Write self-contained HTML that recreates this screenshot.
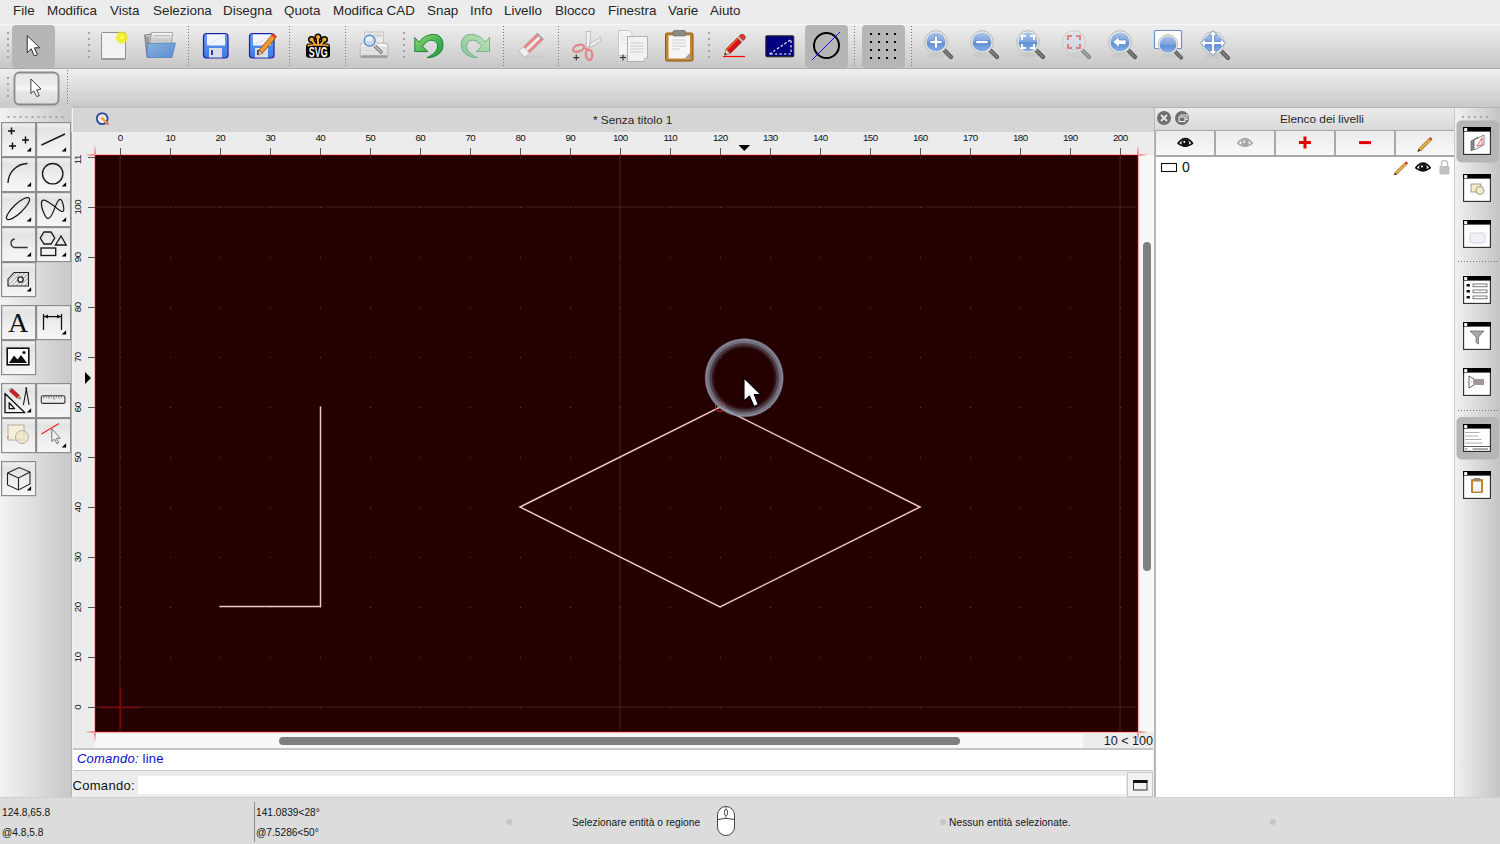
<!DOCTYPE html>
<html><head><meta charset="utf-8">
<style>
*{margin:0;padding:0;box-sizing:border-box}
html,body{width:1500px;height:844px;overflow:hidden;background:#ececec;font-family:"Liberation Sans",sans-serif;color:#222}
.a{position:absolute}
#menu{left:0;top:0;width:1500px;height:24px;background:#ececec}
#menu span{position:absolute;top:3px;font-size:13.4px;color:#262626;white-space:nowrap}
#tb1{left:0;top:24px;width:1500px;height:45px;background:linear-gradient(#eeeeee,#c7c7c7);border-top:1px solid #f6f6f6;border-bottom:1px solid #acacac}
#tb2{left:0;top:69px;width:1500px;height:39px;background:linear-gradient(#efefef,#c9c9c9);border-bottom:1px solid #b0b0b0}
.dots{position:absolute;width:0;border-left:2px dotted #8a8a8a}
#dockL{left:0;top:108px;width:72px;height:690px;background:linear-gradient(90deg,#f2f2f2,#c8c8c8);border-right:1px solid #b4b4b4}
#mdi{left:72px;top:108px;width:1083px;height:690px;background:#ececec;border-left:1px solid #f2f2f2}
#title{left:71px;top:108px;width:1083px;height:24px;background:#d5d5d5}
#rulH{left:72px;top:132px;width:1082px;height:23px;background:#ececec}
#rulV{left:72px;top:155px;width:23px;height:577px;background:#ececec}
#canvas{left:95px;top:155px;width:1043px;height:577px;background:#210000}
#vscroll{left:1138px;top:132px;width:16px;height:600px;background:#f7f7f7}
#hscroll{left:95px;top:732px;width:1059px;height:16px;background:#f7f7f7}
#cmdh{left:72px;top:749px;width:1082px;height:21px;background:#fff;border-top:1px solid #c8c8c8;border-bottom:1px solid #c8c8c8}
#cmdi{left:72px;top:770px;width:1082px;height:28px;background:#ececec}
#panel{left:1155px;top:108px;width:299px;height:690px;background:#fff;border-left:1px solid #bdbdbd}
#dockR{left:1454px;top:108px;width:46px;height:690px;background:linear-gradient(90deg,#f0f0f0,#c4c4c4);border-left:1px solid #c8c8c8}
#status{left:0;top:798px;width:1500px;height:46px;background:#dcdcdc}
.st{position:absolute;font-size:10.5px;color:#141414;white-space:nowrap}
</style></head><body>
<div id="menu" class="a">
<span style="left:13px">File</span>
<span style="left:47px">Modifica</span>
<span style="left:110px">Vista</span>
<span style="left:153px">Seleziona</span>
<span style="left:223px">Disegna</span>
<span style="left:284px">Quota</span>
<span style="left:333px">Modifica CAD</span>
<span style="left:427px">Snap</span>
<span style="left:470px">Info</span>
<span style="left:504px">Livello</span>
<span style="left:555px">Blocco</span>
<span style="left:608px">Finestra</span>
<span style="left:668px">Varie</span>
<span style="left:710px">Aiuto</span>
</div>
<div id="tb1" class="a"></div>
<svg class="a" style="left:0;top:24px" width="1500" height="45" viewBox="0 24 1500 45">
<defs>
<linearGradient id="gBlueLens" x1="0" y1="0" x2="0" y2="1"><stop offset="0" stop-color="#a9c4ea"/><stop offset="0.5" stop-color="#7ba2dc"/><stop offset="0.55" stop-color="#5d8ed6"/><stop offset="1" stop-color="#8ab2ea"/></linearGradient>
<linearGradient id="gRedLens" x1="0" y1="0" x2="0" y2="1"><stop offset="0" stop-color="#dde3ee"/><stop offset="1" stop-color="#c6d2e6"/></linearGradient>
<linearGradient id="gFloppy" x1="0" y1="0" x2="0" y2="1"><stop offset="0" stop-color="#6aa0f4"/><stop offset="1" stop-color="#3e78e4"/></linearGradient>
<linearGradient id="gUndo" x1="0" y1="0" x2="1" y2="1"><stop offset="0" stop-color="#9ad878"/><stop offset="0.6" stop-color="#3fb050"/><stop offset="1" stop-color="#1f9a38"/></linearGradient><linearGradient id="gRedo" x1="0" y1="0" x2="1" y2="1"><stop offset="0" stop-color="#c2e4b0"/><stop offset="0.6" stop-color="#9fd0a4"/><stop offset="1" stop-color="#84c096"/></linearGradient>
<linearGradient id="gPrinter" x1="0" y1="0" x2="0" y2="1"><stop offset="0" stop-color="#fbfbfb"/><stop offset="1" stop-color="#d4d4d4"/></linearGradient>
<radialGradient id="gGlow"><stop offset="0" stop-color="#fffff0"/><stop offset="0.25" stop-color="#f8f020"/><stop offset="0.7" stop-color="#f0ea20" stop-opacity="0.8"/><stop offset="1" stop-color="#f0ea20" stop-opacity="0"/></radialGradient><linearGradient id="gPaper" x1="0" y1="0" x2="0" y2="1"><stop offset="0" stop-color="#fafafa"/><stop offset="0.4" stop-color="#c8c8c8"/><stop offset="1" stop-color="#e8e8e8"/></linearGradient><linearGradient id="gFolder" x1="0" y1="0" x2="1" y2="1"><stop offset="0" stop-color="#8ab0dc"/><stop offset="1" stop-color="#5a8ed0"/></linearGradient><g id="lens">
 <ellipse cx="1" cy="13.5" rx="10" ry="2.5" fill="#000" opacity="0.035"/>
 <line x1="7" y1="7" x2="15" y2="15" stroke="#5a5a5a" stroke-width="4.2" stroke-linecap="round"/>
 <line x1="7" y1="7" x2="15" y2="15" stroke="#8a8a8a" stroke-width="1.4" stroke-linecap="round"/>
 <circle r="11.3" fill="#ebebe6" stroke="#b9b9b0" stroke-width="1"/>
</g>
</defs>
<rect x="12" y="25" width="43" height="43" rx="4" fill="#b6b6b6"/>
<path d="M27.2 35.6 L27.2 52.6 L31.2 48.8 L34.3 56 L37.3 54.7 L34.4 47.8 L39.7 47.8 Z" fill="#fff" stroke="#1a1a1a" stroke-width="0.9" stroke-linejoin="round"/>
<!-- handles -->
<g fill="#a3a3a3">
<rect x="7" y="32" width="2" height="2"/><rect x="7" y="38" width="2" height="2"/><rect x="7" y="44" width="2" height="2"/><rect x="7" y="50" width="2" height="2"/><rect x="7" y="56" width="2" height="2"/>
<rect x="88" y="32" width="2" height="2"/><rect x="88" y="38" width="2" height="2"/><rect x="88" y="44" width="2" height="2"/><rect x="88" y="50" width="2" height="2"/><rect x="88" y="56" width="2" height="2"/>
<rect x="403" y="32" width="2" height="2"/><rect x="403" y="38" width="2" height="2"/><rect x="403" y="44" width="2" height="2"/><rect x="403" y="50" width="2" height="2"/><rect x="403" y="56" width="2" height="2"/>
<rect x="708" y="32" width="2" height="2"/><rect x="708" y="38" width="2" height="2"/><rect x="708" y="44" width="2" height="2"/><rect x="708" y="50" width="2" height="2"/><rect x="708" y="56" width="2" height="2"/>
</g>
<g stroke="#777" stroke-width="1" stroke-dasharray="1 2">
<line x1="188.5" y1="26" x2="188.5" y2="67"/><line x1="289.5" y1="26" x2="289.5" y2="67"/><line x1="345.5" y1="26" x2="345.5" y2="67"/><line x1="503.5" y1="26" x2="503.5" y2="67"/><line x1="558.5" y1="26" x2="558.5" y2="67"/><line x1="854.5" y1="26" x2="854.5" y2="67"/><line x1="911.5" y1="26" x2="911.5" y2="67"/>
</g>
<!-- new doc -->
<rect x="101.5" y="32.5" width="24" height="27" rx="1" fill="#f2f2f2" stroke="#8f8f8f"/>
<rect x="102" y="58" width="23" height="2" fill="#9a9a9a"/>
<circle cx="121.8" cy="37.5" r="7" fill="url(#gGlow)"/>
<!-- open folder -->
<path d="M144.5 35 L151 34 L151 57 L147 57 Z" fill="#9a9a9a" stroke="#6a6a6a" stroke-width="0.6"/>
<path d="M146 36 L150 35.5 L149 56" fill="none" stroke="#f4f4f4" stroke-width="0.8"/>
<path d="M151.5 32.5 L172.7 32.5 L170.5 50 L148 52 Z" fill="url(#gPaper)" stroke="#8a8a8a" stroke-width="0.7"/>
<path d="M154 35.5 L170 35.5" stroke="#bbb" stroke-width="1"/>
<path d="M147 43.5 L175.5 43 L172 57.5 L147 57.5 Z" fill="url(#gFolder)" stroke="#4a7ac0" stroke-width="0.7"/>
<!-- save -->
<g id="floppy">
<rect x="203.5" y="33.5" width="24.5" height="24.5" rx="3" fill="url(#gFloppy)" stroke="#2222a0" stroke-width="1.2"/>
<rect x="207" y="34.5" width="18" height="11" fill="#f4f6ff"/>
<path d="M207 45 L225 36" stroke="#d6def6" stroke-width="1"/>
<rect x="209" y="48" width="13" height="9.5" fill="#d9dde6"/>
<rect x="211" y="50" width="2" height="5" fill="#2040c0"/>
</g>
<use href="#floppy" x="46" y="0"/>
<path d="M259 50 L272.5 34.5 L276 37.5 L262.5 53 Z" fill="#f29a2a" stroke="#9a4010" stroke-width="0.8"/>
<path d="M271.5 35.5 L273.5 33.3 L277 36.5 L275 38.5 Z" fill="#e23a2a"/>
<path d="M259 50 L262.5 53 L258 55 Z" fill="#f0d0a0" stroke="#703010" stroke-width="0.6"/>
<!-- svg -->
<g fill="#000" stroke="#000" stroke-linecap="round">
<path d="M311.6 39.5 L315.5 45 M318 37.3 L318 45 M324.4 39.5 L320.5 45" stroke-width="4.6"/>
<circle cx="311.6" cy="39.5" r="3.6" stroke="none"/><circle cx="318" cy="37.1" r="3.6" stroke="none"/><circle cx="324.4" cy="39.5" r="3.6" stroke="none"/>
</g>
<rect x="306" y="43.5" width="24" height="14.3" rx="3" fill="#000"/>
<g stroke="#f4aa30" stroke-linecap="round" fill="#f4aa30">
<path d="M311.6 39.5 L315.5 45 M318 37.3 L318 45 M324.4 39.5 L320.5 45" stroke-width="2"/>
<circle cx="311.6" cy="39.5" r="2.1" stroke="none"/><circle cx="318" cy="37.1" r="2.1" stroke="none"/><circle cx="324.4" cy="39.5" r="2.1" stroke="none"/>
<path d="M308 45.6 Q318 43.8 328 45.6" stroke-width="1.6" fill="none"/>
</g>
<text x="318.2" y="57.2" font-family="Liberation Sans" font-weight="bold" font-size="14" fill="#fff" text-anchor="middle" textLength="18.8" lengthAdjust="spacingAndGlyphs">SVG</text>
<!-- print preview -->
<rect x="364.5" y="32" width="19" height="14" rx="1.5" fill="#ececec" stroke="#b8b8b8" stroke-width="0.8"/>
<rect x="366" y="34" width="16" height="3" fill="#d4d4d4"/>
<path d="M360.2 46 Q360.2 43.2 363 43.2 H385 Q387.8 43.2 387.8 46 V57.6 H360.2 Z" fill="url(#gPrinter)" stroke="#a8a8a8" stroke-width="0.8"/>
<rect x="362.5" y="47" width="23" height="3.5" rx="1" fill="#e2e2e2" stroke="#c8c8c8" stroke-width="0.5"/>
<rect x="361" y="55.2" width="26" height="2.6" rx="1" fill="#9a9a9a"/>
<line x1="374" y1="45" x2="381" y2="52" stroke="#7a7a7a" stroke-width="3.6" stroke-linecap="round"/>
<line x1="374" y1="45" x2="381" y2="52" stroke="#c8c8c8" stroke-width="1.4" stroke-linecap="round"/>
<circle cx="369.6" cy="40.7" r="7.2" fill="#fafafa" stroke="#d0d0d0" stroke-width="0.6"/>
<circle cx="369.6" cy="40.7" r="5.5" fill="#c8d8ee" stroke="#4a80c8" stroke-width="1.3"/>
<ellipse cx="369" cy="39" rx="3.4" ry="2.2" fill="#eef4fc" opacity="0.85"/>
<!-- undo -->
<path d="M414.8 37.5 L418.8 42.2 C424 35.5 432 32.8 438 35.3 C444.3 38.5 444.8 49 439.3 53.5 C435.8 56.5 430.5 58 427 57.6 C431.5 55.5 437 52 437.6 47 C438 42.5 434.5 40 430.5 40.3 C427.5 40.6 424.8 43 422.6 46.4 L427.9 51.6 L414.8 51.6 Z" fill="url(#gUndo)" stroke="#13792c" stroke-width="0.9" stroke-linejoin="round"/>
<g transform="translate(904.3 0) scale(-1 1)">
<path d="M414.8 37.5 L418.8 42.2 C424 35.5 432 32.8 438 35.3 C444.3 38.5 444.8 49 439.3 53.5 C435.8 56.5 430.5 58 427 57.6 C431.5 55.5 437 52 437.6 47 C438 42.5 434.5 40 430.5 40.3 C427.5 40.6 424.8 43 422.6 46.4 L427.9 51.6 L414.8 51.6 Z" fill="url(#gRedo)" stroke="#6cae86" stroke-width="0.9" stroke-linejoin="round"/>
</g>
<!-- eraser -->
<ellipse cx="534" cy="57" rx="11" ry="1.6" fill="#c8c8c8" opacity="0.7"/>
<g transform="translate(531.3 45.2) rotate(-44.4)">
<rect x="-12.9" y="-4.3" width="25.8" height="8.6" fill="#e68a8a" stroke="#c87878" stroke-width="0.5"/>
<rect x="-7" y="-1.4" width="19.9" height="2.8" fill="#f2eeee"/>
<rect x="-12.9" y="-4.3" width="6" height="8.6" fill="#f0f0f0" stroke="#b8b8b8" stroke-width="0.5"/>
<rect x="11.4" y="-4.3" width="1.5" height="8.6" fill="#a0a0a0"/>
</g>
<!-- scissors -->
<path d="M586.2 31.5 L590.5 31.2 L589.8 47 L586.3 47 Z" fill="#f2f2f2" stroke="#a8a8a8" stroke-width="0.7"/>
<path d="M589.5 44 L600.7 37.5 L601 40.8 L590.5 47.3 Z" fill="#f2f2f2" stroke="#a8a8a8" stroke-width="0.7"/>
<ellipse cx="578.6" cy="48.2" rx="5.7" ry="3.2" transform="rotate(-20 578.6 48.2)" fill="none" stroke="#e48888" stroke-width="2.4"/>
<ellipse cx="589.1" cy="54.8" rx="3.2" ry="5.2" transform="rotate(-6 589.1 54.8)" fill="none" stroke="#e48888" stroke-width="2.4"/>
<path d="M584 48 L588.5 50" stroke="#e48888" stroke-width="2.2"/>
<path d="M573.3 57.6 L579.3 57.6 M576.3 54.6 L576.3 60.6" stroke="#333" stroke-width="1.1"/>
<!-- copy -->
<path d="M618.5 30.5 L629 30.5 L632 33.5 L632 55.5 L618.5 55.5 Z" fill="#f4f4f4" stroke="#c8c8c8"/>
<path d="M621 37 L628 37 M621 40 L628 40 M621 43 L628 43" stroke="#dcdcdc" stroke-width="0.8"/>
<path d="M627.5 36.5 L647.5 36.5 L647.5 58 L644 61.5 L627.5 61.5 Z" fill="#f2f2f2" stroke="#b0b0b0"/>
<path d="M630.5 43 L644 43 M630.5 46 L644 46 M630.5 49 L644 49 M630.5 52 L644 52" stroke="#c4c4c4" stroke-width="0.8"/>
<path d="M647.5 58 L644 58 L644 61.5" fill="#d8d8d8" stroke="#b0b0b0" stroke-width="0.6"/>
<path d="M620 57.5 L626 57.5 M623 54.5 L623 60.5" stroke="#333" stroke-width="1.1"/>
<!-- paste -->
<rect x="665.5" y="33" width="27.5" height="28" rx="1.5" fill="#c08432" stroke="#8a5a18"/>
<rect x="668.5" y="35.5" width="21.5" height="23" fill="#f6f6f6"/>
<rect x="673" y="30.5" width="12.5" height="5.5" rx="1.5" fill="#8a8a80" stroke="#5a5a50" stroke-width="0.6"/>
<path d="M672 40 L686 40 M672 43 L686 43 M672 46 L686 46 M672 49 L680 49" stroke="#c6c6c6" stroke-width="0.8"/>
<path d="M690 53 L690 58.5 L684.5 58.5 Z" fill="#a0a0a0"/>
<!-- pencil w/ red line -->
<path d="M723 56.5 L745 56.5" stroke="#f00" stroke-width="1.2"/>
<g transform="translate(734 45.5) rotate(-45)">
<path d="M-13.5 0 L-8 -3 L-8 3 Z" fill="#f2d2b0" stroke="#6a4010" stroke-width="0.5"/>
<path d="M-13.5 0 L-11.3 -1.2 L-11.3 1.2 Z" fill="#111"/>
<rect x="-8" y="-3" width="16" height="6" fill="#d8101c" stroke="#6a3010" stroke-width="0.6"/>
<rect x="-8" y="-2.8" width="16" height="1.5" fill="#e85a1a"/>
<rect x="8" y="-3" width="2" height="6" fill="#c8c8c8"/>
<path d="M10 -3 H11.5 A3 3 0 0 1 11.5 3 H10 Z" fill="#f03030" stroke="#6a3010" stroke-width="0.6"/>
</g>
<!-- blue rect -->
<rect x="765.8" y="35.8" width="28" height="21" rx="1" fill="#000080" stroke="#302818" stroke-width="1"/>
<path d="M769.5 54 L791 39.5 L791 54 Z" fill="none" stroke="#fff" stroke-width="1.1" stroke-dasharray="2.5 2"/>
<!-- selected circle -->
<rect x="805" y="25" width="43" height="43" rx="4" fill="#b6b6b6"/>
<circle cx="826.5" cy="45.5" r="12.5" fill="none" stroke="#000" stroke-width="2"/>
<line x1="812" y1="60" x2="840" y2="32" stroke="#1010ff" stroke-width="1"/>
<!-- grid -->
<rect x="862" y="25" width="43" height="43" rx="4" fill="#b6b6b6"/>
<g fill="#000">
<rect x="870" y="33" width="2" height="2"/><rect x="878" y="33" width="2" height="2"/><rect x="886" y="33" width="2" height="2"/><rect x="894" y="33" width="2" height="2"/>
<rect x="870" y="41" width="2" height="2"/><rect x="878" y="41" width="2" height="2"/><rect x="886" y="41" width="2" height="2"/><rect x="894" y="41" width="2" height="2"/>
<rect x="870" y="49" width="2" height="2"/><rect x="878" y="49" width="2" height="2"/><rect x="886" y="49" width="2" height="2"/><rect x="894" y="49" width="2" height="2"/>
<rect x="870" y="57" width="2" height="2"/><rect x="878" y="57" width="2" height="2"/><rect x="886" y="57" width="2" height="2"/><rect x="894" y="57" width="2" height="2"/>
</g>
<!-- zoom in -->
<g transform="translate(936 42)"><use href="#lens"/><circle r="9.5" fill="url(#gBlueLens)"/><path d="M-6 -1.5 H-1.5 V-6 H1.5 V-1.5 H6 V1.5 H1.5 V6 H-1.5 V1.5 H-6 Z" fill="#fff" stroke="#3a68b0" stroke-width="0.5"/></g>
<g transform="translate(982 42)"><use href="#lens"/><circle r="9.5" fill="url(#gBlueLens)"/><rect x="-6" y="-1.5" width="12" height="3" fill="#fff" stroke="#3a68b0" stroke-width="0.5"/></g>
<g transform="translate(1028 42)"><use href="#lens"/><circle r="9.5" fill="url(#gBlueLens)"/><path d="M-6 -2 V-6 H-2 M2 -6 H6 V-2 M6 2 V6 H2 M-2 6 H-6 V2" fill="none" stroke="#fff" stroke-width="2"/></g>
<g transform="translate(1074 42)" opacity="0.6"><use href="#lens"/><circle r="9.5" fill="url(#gRedLens)"/><path d="M-6 -2 V-6 H-2 M2 -6 H6 V-2 M6 2 V6 H2 M-2 6 H-6 V2" fill="none" stroke="#e04040" stroke-width="2"/></g>
<g transform="translate(1120 42)"><use href="#lens"/><circle r="9.5" fill="url(#gBlueLens)"/><path d="M-7 0 L-1 -5.5 V-2 H6 V2.5 H-1 V5.5 Z" fill="#fff" stroke="#3a68b0" stroke-width="0.5"/></g>
<rect x="1154.5" y="30.5" width="27" height="18" rx="1" fill="#fff" stroke="#6a8ed0" stroke-width="1.2"/>
<g transform="translate(1168 44.5) scale(0.88)"><use href="#lens"/><circle r="9.5" fill="url(#gBlueLens)"/></g>
<g transform="translate(1213 43)"><use href="#lens"/><circle r="9.5" fill="url(#gBlueLens)"/><path d="M0 -12.5 L4.2 -7.8 H1.6 V-1.6 H7.8 V-4.2 L12.5 0 L7.8 4.2 V1.6 H1.6 V7.8 H4.2 L0 12.5 L-4.2 7.8 H-1.6 V1.6 H-7.8 V4.2 L-12.5 0 L-7.8 -4.2 V-1.6 H-1.6 V-7.8 H-4.2 Z" fill="#fff" stroke="#4a78c0" stroke-width="0.7" stroke-linejoin="round"/></g>
</svg>

<div id="tb2" class="a"></div>
<svg class="a" style="left:0;top:69px" width="120" height="39" viewBox="0 69 120 39">
<defs><linearGradient id="gBtn2" x1="0" y1="0" x2="0" y2="1"><stop offset="0" stop-color="#e6e6e6"/><stop offset="0.4" stop-color="#eeeeee"/><stop offset="0.5" stop-color="#f8f8f8"/><stop offset="0.62" stop-color="#e6e6e6"/><stop offset="1" stop-color="#dcdcdc"/></linearGradient></defs>
<g fill="#a3a3a3"><rect x="7" y="77" width="2" height="2"/><rect x="7" y="83" width="2" height="2"/><rect x="7" y="89" width="2" height="2"/><rect x="7" y="95" width="2" height="2"/></g>
<rect x="14.5" y="72.5" width="44" height="32" rx="5" fill="url(#gBtn2)" stroke="#8a8a8a" stroke-width="1.8"/>
<path d="M30.9 79 L30.9 93.6 L33.8 91 L36.8 96.6 L39.3 95.5 L36.6 90 L41 89 Z" fill="#fff" stroke="#2a2a2a" stroke-width="0.9" stroke-linejoin="round"/>
<line x1="67.5" y1="70" x2="67.5" y2="106" stroke="#777" stroke-width="1" stroke-dasharray="1 2"/>
</svg>

<div id="dockL" class="a"></div>
<svg class="a" style="left:0;top:108px" width="72" height="400" viewBox="0 108 72 400">
<defs>
<linearGradient id="gBtnL" x1="0" y1="0" x2="0" y2="1"><stop offset="0" stop-color="#f2f2f2"/><stop offset="0.2" stop-color="#e3e3e3"/><stop offset="0.6" stop-color="#efefef"/><stop offset="1" stop-color="#f6f6f6"/></linearGradient>
<path id="tri" d="M0 0 L4.4 -4.2 L4.4 0 Z" fill="#000"/>
<pattern id="hatch" width="3" height="3" patternUnits="userSpaceOnUse" patternTransform="rotate(45)"><line x1="0" y1="0" x2="0" y2="3" stroke="#333" stroke-width="0.7"/></pattern>
</defs>
<g fill="#a5a5a5">
<rect x="7.5" y="116" width="2" height="2"/><rect x="13.5" y="116" width="2" height="2"/><rect x="19.5" y="116" width="2" height="2"/><rect x="25.5" y="116" width="2" height="2"/><rect x="31.5" y="116" width="2" height="2"/><rect x="37.5" y="116" width="2" height="2"/><rect x="43.5" y="116" width="2" height="2"/><rect x="49.5" y="116" width="2" height="2"/><rect x="55.5" y="116" width="2" height="2"/><rect x="61.5" y="116" width="2" height="2"/>
</g>
<g fill="url(#gBtnL)" stroke="#8d8d8d" stroke-width="1.2">
<rect x="1.6" y="122.6" width="34" height="34"/><rect x="36.6" y="122.6" width="34" height="34"/>
<rect x="1.6" y="157.6" width="34" height="34"/><rect x="36.6" y="157.6" width="34" height="34"/>
<rect x="1.6" y="192.6" width="34" height="34"/><rect x="36.6" y="192.6" width="34" height="34"/>
<rect x="1.6" y="227.6" width="34" height="34"/><rect x="36.6" y="227.6" width="34" height="34"/>
<rect x="1.6" y="262.6" width="34" height="34"/>
<rect x="1.6" y="305.6" width="34" height="34"/><rect x="36.6" y="305.6" width="34" height="34"/>
<rect x="1.6" y="340.6" width="34" height="34"/>
<rect x="1.6" y="383.6" width="34" height="34"/><rect x="36.6" y="383.6" width="34" height="34"/>
<rect x="1.6" y="418.6" width="34" height="34"/><rect x="36.6" y="418.6" width="34" height="34"/>
<rect x="1.6" y="461.6" width="34" height="34"/>
</g>
<!-- corner triangles -->
<use href="#tri" x="26.7" y="151.5"/><use href="#tri" x="61.7" y="151.5"/>
<use href="#tri" x="26.7" y="186.5"/><use href="#tri" x="61.7" y="186.5"/>
<use href="#tri" x="26.7" y="221.5"/><use href="#tri" x="61.7" y="221.5"/>
<use href="#tri" x="26.7" y="256.5"/><use href="#tri" x="61.7" y="256.5"/>
<use href="#tri" x="26.7" y="291.5"/>
<use href="#tri" x="61.7" y="334.5"/>
<use href="#tri" x="26.7" y="412.5"/>
<use href="#tri" x="61.7" y="447.5"/>
<use href="#tri" x="26.7" y="490.5"/>
<g stroke="#111" fill="none" stroke-width="1.35">
<!-- points -->
<path d="M8 131 H15 M11.5 127.5 V134.5 M22 140 H29 M25.5 136.5 V143.5 M9 146 H16 M12.5 142.5 V149.5" stroke-width="1.5"/>
<!-- line -->
<path d="M41.5 145 L65 134" stroke="#1a1a1a" stroke-width="1.4"/>
<!-- arc -->
<path d="M8 183 A20 20 0 0 1 27.5 163.5" stroke="#1a1a1a"/>
<!-- circle -->
<circle cx="52.7" cy="173.7" r="10.2" stroke="#1a1a1a"/>
<!-- ellipse -->
<ellipse cx="18" cy="208.6" rx="15.3" ry="4.6" transform="rotate(-43.5 18 208.6)" stroke="#1a1a1a" stroke-width="1.25"/>
<!-- spline -->
<path d="M55.2 206.9 C57 202 58.5 199.2 60.2 199.3 C62.5 199.5 64.6 209.5 63.3 211.2 C62 212.8 58 209 55.2 206.9 C51 204 46 199.5 43.2 200.2 C40.2 201 41.5 207 43 211 C44.5 215 46.5 218.8 48.4 218.5 C50.5 218.2 53 213 55.2 206.9 Z" stroke="#1a1a1a" stroke-width="1.25"/>
<!-- polyline -->
<path d="M14.7 239 A4.3 4.3 0 0 0 14.7 247.5 H27.7" stroke="#333"/>
<!-- shapes -->
<path d="M44 232 H51 L54.7 238 L51 244 H44 L40.3 238 Z M55.5 245 L61 236 L66.2 245 Z" stroke="#1a1a1a"/>
<rect x="41" y="248" width="14.7" height="7.5" stroke="#1a1a1a"/>
<!-- hatch -->
<path d="M8 279 L14 272.5 H28.5 V286 H8 Z" fill="url(#hatch)" stroke="#222" stroke-width="1.1"/>
<circle cx="20.5" cy="279.5" r="2.7" fill="#f0f0f0" stroke="#222"/>
<!-- dimension -->
<path d="M43.5 314 V330 M61.5 314 V330 M44 316.5 H61" stroke="#111" stroke-width="1.25"/>
<path d="M44 316.5 L48 314.5 V318.5 Z M61 316.5 L57 314.5 V318.5 Z" fill="#111" stroke="none"/>
<!-- image -->
<rect x="7.2" y="348.2" width="21.6" height="16.6" stroke="#111" stroke-width="1.6" fill="#fff"/>
<path d="M9 363 L14 355.5 L17.5 359.5 L21 355 L27 363 Z" fill="#111" stroke="none"/>
<circle cx="24" cy="352.5" r="1.6" fill="#111" stroke="none"/>
<!-- set square + compass + pencil -->
<path d="M5 412.7 L5 393.5 L24.9 412.7 Z M9.2 408.6 V402.7 L14.6 408.6 Z" stroke="#111" stroke-width="1.3" stroke-linejoin="round"/>
<g transform="translate(15 393.8) rotate(43)"><rect x="-6" y="-1.8" width="10" height="3.6" fill="#d81c1c" stroke="#5a1010" stroke-width="0.6"/><path d="M4 -1.8 L7.5 0 L4 1.8 Z" fill="#f0c8a0" stroke="#5a1010" stroke-width="0.5"/><rect x="-7.5" y="-1.8" width="1.5" height="3.6" fill="#b0b0b0" stroke="none"/></g>
<path d="M26.3 389 L23.4 405 M26.3 389 L29.1 405" stroke="#111" stroke-width="1.1"/>
<circle cx="26.3" cy="388.3" r="1" fill="#111" stroke="none"/>
<!-- ruler -->
<rect x="41.3" y="395.8" width="23.6" height="7.6" rx="1.5" stroke="#333" stroke-width="1.1"/>
<path d="M44 396 V398.5 M46.5 396 V397.5 M49 396 V398.5 M51.5 396 V397.5 M54 396 V399.5 M56.5 396 V397.5 M59 396 V398.5 M61.5 396 V397.5" stroke="#444" stroke-width="0.7"/>
<!-- block -->
<rect x="8" y="425" width="16" height="15" fill="#f4f0d8" stroke="#a8a8a0" stroke-width="0.9"/>
<circle cx="22" cy="437" r="6.5" fill="#ede6c8" fill-opacity="0.7" stroke="#a8a8a0" stroke-width="0.9"/>
<circle cx="7.8" cy="437.5" r="1" fill="#f07070" stroke="none"/>
<!-- red line + cursor -->
<path d="M41.5 434 L59 423.5" stroke="#ee2222" stroke-width="1.2"/>
<path d="M51.8 428.8 V441.5 L54.6 439 L56.8 443.6 L58.6 442.8 L56.5 438.3 L60.3 438.3 Z" fill="#f4f4f4" stroke="#555" stroke-width="0.8" stroke-linejoin="round"/>
<!-- cube -->
<path d="M7.5 473 L19 467.5 L30 472 L30 484 L18.5 490 L7.5 485 Z M7.5 473 L18.5 478 L30 472 M18.5 478 V490" stroke="#222" stroke-width="1.1"/>
</g>
<text x="18.2" y="331.6" font-family="Liberation Serif" font-size="28" text-anchor="middle" fill="#111">A</text>
</svg>

<div id="mdi" class="a"></div>
<div id="title" class="a"></div>
<div class="a" style="left:71px;top:106px;width:1084px;height:2px;background:#c2c2c2"></div>
<div class="a" style="left:0;top:106px;width:71px;height:2px;background:#cfcfcf"></div>
<svg class="a" style="left:94px;top:110px" width="16" height="17" viewBox="94 110 16 17">
<circle cx="102.2" cy="118.6" r="5.4" fill="#f6f6f6" stroke="#34509c" stroke-width="2"/>
<path d="M99 118 L105 118 M102 115 L102 121" stroke="#c44" stroke-width="0.6" opacity="0.6"/>
<path d="M102.5 118.5 L107.5 123.5" stroke="#f0a020" stroke-width="2.2" stroke-linecap="round"/>
<circle cx="107.6" cy="123.8" r="1.2" fill="#e06060"/>
</svg>
<div class="a" style="left:593px;top:113px;font-size:11.8px;color:#262626;white-space:nowrap">* Senza titolo 1</div>
<!-- scrollbars -->
<div class="a" style="left:1138px;top:155px;width:16px;height:577px;background:#f8f8f8"></div>
<div class="a" style="left:1143px;top:242px;width:8px;height:329px;border-radius:4px;background:#7f7f7f"></div>
<div class="a" style="left:95px;top:732px;width:989px;height:16px;background:#f8f8f8"></div>
<div class="a" style="left:279px;top:737px;width:681px;height:8px;border-radius:4px;background:#7f7f7f"></div>
<div class="a" style="left:72px;top:732px;width:23px;height:16px;background:#ececec"></div>
<div class="a" style="left:1083px;top:732px;width:71px;height:16px;background:#ececec"></div>
<div class="a" style="left:1083px;top:734px;width:71px;text-align:right;font-size:12.6px;color:#1a1a1a;white-space:nowrap;padding-right:1px">10 &lt; 100</div>
<div class="a" style="left:1154px;top:108px;width:1px;height:690px;background:#b8b8b8"></div>
<!-- command area -->
<div class="a" style="left:72px;top:748px;width:1081px;height:2px;background:#c6c6c6"></div>
<div class="a" style="left:72px;top:750px;width:1081px;height:20px;background:#fff"></div>
<div class="a" style="left:77px;top:751px;font-size:13px;color:#0c0cd4;white-space:nowrap;letter-spacing:0.22px"><i>Comando:</i> line</div>
<div class="a" style="left:72px;top:770px;width:1081px;height:1px;background:#c8c8c8"></div>
<div class="a" style="left:72px;top:771px;width:1081px;height:27px;background:#ececec"></div>
<div class="a" style="left:72.5px;top:778px;font-size:13px;color:#111;white-space:nowrap;letter-spacing:0.3px">Comando:</div>
<div class="a" style="left:138px;top:776px;width:988px;height:18px;background:#fff"></div>
<div class="a" style="left:1127px;top:772px;width:26px;height:25px;background:#f2f2f2;border:1px solid #c8c8c8"></div>
<svg class="a" style="left:1127px;top:772px" width="26" height="25" viewBox="1127 772 26 25">
<rect x="1133.5" y="780.5" width="13.5" height="9.5" fill="none" stroke="#333" stroke-width="1"/>
<rect x="1133" y="780" width="14.5" height="3" fill="#111"/>
</svg>

<div id="rulH" class="a"></div>
<div id="rulV" class="a"></div>
<svg class="a" style="left:72px;top:132px" width="1083" height="620" viewBox="72 132 1083 620">
<defs><radialGradient id="gRing" cx="744.2" cy="377.8" r="40" gradientUnits="userSpaceOnUse"><stop offset="0.74" stop-color="#8a90a2" stop-opacity="0"/><stop offset="0.82" stop-color="#70768a" stop-opacity="0.35"/><stop offset="0.90" stop-color="#858b9d" stop-opacity="0.75"/><stop offset="0.96" stop-color="#8f95a6" stop-opacity="0.85"/><stop offset="1" stop-color="#8f95a6" stop-opacity="0"/></radialGradient><clipPath id="cpV"><rect x="72" y="155" width="23" height="577"/></clipPath><clipPath id="cpH"><rect x="95" y="132" width="1043" height="23"/></clipPath><linearGradient id="gL" x1="1" y1="0" x2="0" y2="0"><stop offset="0" stop-color="#ff3a3a" stop-opacity="0.6"/><stop offset="1" stop-color="#ff2020" stop-opacity="0"/></linearGradient><linearGradient id="gR" x1="0" y1="0" x2="1" y2="0"><stop offset="0" stop-color="#ff3a3a" stop-opacity="0.6"/><stop offset="1" stop-color="#ff2020" stop-opacity="0"/></linearGradient><linearGradient id="gU" x1="0" y1="1" x2="0" y2="0"><stop offset="0" stop-color="#ff3a3a" stop-opacity="0.6"/><stop offset="1" stop-color="#ff2020" stop-opacity="0"/></linearGradient><linearGradient id="gD" x1="0" y1="0" x2="0" y2="1"><stop offset="0" stop-color="#ff3a3a" stop-opacity="0.6"/><stop offset="1" stop-color="#ff2020" stop-opacity="0"/></linearGradient></defs>
<rect x="95" y="155" width="1043" height="577" fill="#250000"/>
<line x1="120" y1="156" x2="120" y2="731" stroke="#331010" stroke-width="2"/>
<line x1="620" y1="156" x2="620" y2="731" stroke="#331010" stroke-width="2"/>
<line x1="1120" y1="156" x2="1120" y2="731" stroke="#331010" stroke-width="2"/>
<line x1="96" y1="707" x2="1137" y2="707" stroke="#331010" stroke-width="2"/>
<line x1="96" y1="207" x2="1137" y2="207" stroke="#331010" stroke-width="2"/>
<path d="M120 707h1v1h-1zM120 657h1v1h-1zM120 607h1v1h-1zM120 557h1v1h-1zM120 507h1v1h-1zM120 457h1v1h-1zM120 407h1v1h-1zM120 357h1v1h-1zM120 307h1v1h-1zM120 257h1v1h-1zM120 207h1v1h-1zM120 157h1v1h-1zM170 707h1v1h-1zM170 657h1v1h-1zM170 607h1v1h-1zM170 557h1v1h-1zM170 507h1v1h-1zM170 457h1v1h-1zM170 407h1v1h-1zM170 357h1v1h-1zM170 307h1v1h-1zM170 257h1v1h-1zM170 207h1v1h-1zM170 157h1v1h-1zM220 707h1v1h-1zM220 657h1v1h-1zM220 607h1v1h-1zM220 557h1v1h-1zM220 507h1v1h-1zM220 457h1v1h-1zM220 407h1v1h-1zM220 357h1v1h-1zM220 307h1v1h-1zM220 257h1v1h-1zM220 207h1v1h-1zM220 157h1v1h-1zM270 707h1v1h-1zM270 657h1v1h-1zM270 607h1v1h-1zM270 557h1v1h-1zM270 507h1v1h-1zM270 457h1v1h-1zM270 407h1v1h-1zM270 357h1v1h-1zM270 307h1v1h-1zM270 257h1v1h-1zM270 207h1v1h-1zM270 157h1v1h-1zM320 707h1v1h-1zM320 657h1v1h-1zM320 607h1v1h-1zM320 557h1v1h-1zM320 507h1v1h-1zM320 457h1v1h-1zM320 407h1v1h-1zM320 357h1v1h-1zM320 307h1v1h-1zM320 257h1v1h-1zM320 207h1v1h-1zM320 157h1v1h-1zM370 707h1v1h-1zM370 657h1v1h-1zM370 607h1v1h-1zM370 557h1v1h-1zM370 507h1v1h-1zM370 457h1v1h-1zM370 407h1v1h-1zM370 357h1v1h-1zM370 307h1v1h-1zM370 257h1v1h-1zM370 207h1v1h-1zM370 157h1v1h-1zM420 707h1v1h-1zM420 657h1v1h-1zM420 607h1v1h-1zM420 557h1v1h-1zM420 507h1v1h-1zM420 457h1v1h-1zM420 407h1v1h-1zM420 357h1v1h-1zM420 307h1v1h-1zM420 257h1v1h-1zM420 207h1v1h-1zM420 157h1v1h-1zM470 707h1v1h-1zM470 657h1v1h-1zM470 607h1v1h-1zM470 557h1v1h-1zM470 507h1v1h-1zM470 457h1v1h-1zM470 407h1v1h-1zM470 357h1v1h-1zM470 307h1v1h-1zM470 257h1v1h-1zM470 207h1v1h-1zM470 157h1v1h-1zM520 707h1v1h-1zM520 657h1v1h-1zM520 607h1v1h-1zM520 557h1v1h-1zM520 507h1v1h-1zM520 457h1v1h-1zM520 407h1v1h-1zM520 357h1v1h-1zM520 307h1v1h-1zM520 257h1v1h-1zM520 207h1v1h-1zM520 157h1v1h-1zM570 707h1v1h-1zM570 657h1v1h-1zM570 607h1v1h-1zM570 557h1v1h-1zM570 507h1v1h-1zM570 457h1v1h-1zM570 407h1v1h-1zM570 357h1v1h-1zM570 307h1v1h-1zM570 257h1v1h-1zM570 207h1v1h-1zM570 157h1v1h-1zM620 707h1v1h-1zM620 657h1v1h-1zM620 607h1v1h-1zM620 557h1v1h-1zM620 507h1v1h-1zM620 457h1v1h-1zM620 407h1v1h-1zM620 357h1v1h-1zM620 307h1v1h-1zM620 257h1v1h-1zM620 207h1v1h-1zM620 157h1v1h-1zM670 707h1v1h-1zM670 657h1v1h-1zM670 607h1v1h-1zM670 557h1v1h-1zM670 507h1v1h-1zM670 457h1v1h-1zM670 407h1v1h-1zM670 357h1v1h-1zM670 307h1v1h-1zM670 257h1v1h-1zM670 207h1v1h-1zM670 157h1v1h-1zM720 707h1v1h-1zM720 657h1v1h-1zM720 607h1v1h-1zM720 557h1v1h-1zM720 507h1v1h-1zM720 457h1v1h-1zM720 407h1v1h-1zM720 357h1v1h-1zM720 307h1v1h-1zM720 257h1v1h-1zM720 207h1v1h-1zM720 157h1v1h-1zM770 707h1v1h-1zM770 657h1v1h-1zM770 607h1v1h-1zM770 557h1v1h-1zM770 507h1v1h-1zM770 457h1v1h-1zM770 407h1v1h-1zM770 357h1v1h-1zM770 307h1v1h-1zM770 257h1v1h-1zM770 207h1v1h-1zM770 157h1v1h-1zM820 707h1v1h-1zM820 657h1v1h-1zM820 607h1v1h-1zM820 557h1v1h-1zM820 507h1v1h-1zM820 457h1v1h-1zM820 407h1v1h-1zM820 357h1v1h-1zM820 307h1v1h-1zM820 257h1v1h-1zM820 207h1v1h-1zM820 157h1v1h-1zM870 707h1v1h-1zM870 657h1v1h-1zM870 607h1v1h-1zM870 557h1v1h-1zM870 507h1v1h-1zM870 457h1v1h-1zM870 407h1v1h-1zM870 357h1v1h-1zM870 307h1v1h-1zM870 257h1v1h-1zM870 207h1v1h-1zM870 157h1v1h-1zM920 707h1v1h-1zM920 657h1v1h-1zM920 607h1v1h-1zM920 557h1v1h-1zM920 507h1v1h-1zM920 457h1v1h-1zM920 407h1v1h-1zM920 357h1v1h-1zM920 307h1v1h-1zM920 257h1v1h-1zM920 207h1v1h-1zM920 157h1v1h-1zM970 707h1v1h-1zM970 657h1v1h-1zM970 607h1v1h-1zM970 557h1v1h-1zM970 507h1v1h-1zM970 457h1v1h-1zM970 407h1v1h-1zM970 357h1v1h-1zM970 307h1v1h-1zM970 257h1v1h-1zM970 207h1v1h-1zM970 157h1v1h-1zM1020 707h1v1h-1zM1020 657h1v1h-1zM1020 607h1v1h-1zM1020 557h1v1h-1zM1020 507h1v1h-1zM1020 457h1v1h-1zM1020 407h1v1h-1zM1020 357h1v1h-1zM1020 307h1v1h-1zM1020 257h1v1h-1zM1020 207h1v1h-1zM1020 157h1v1h-1zM1070 707h1v1h-1zM1070 657h1v1h-1zM1070 607h1v1h-1zM1070 557h1v1h-1zM1070 507h1v1h-1zM1070 457h1v1h-1zM1070 407h1v1h-1zM1070 357h1v1h-1zM1070 307h1v1h-1zM1070 257h1v1h-1zM1070 207h1v1h-1zM1070 157h1v1h-1zM1120 707h1v1h-1zM1120 657h1v1h-1zM1120 607h1v1h-1zM1120 557h1v1h-1zM1120 507h1v1h-1zM1120 457h1v1h-1zM1120 407h1v1h-1zM1120 357h1v1h-1zM1120 307h1v1h-1zM1120 257h1v1h-1zM1120 207h1v1h-1zM1120 157h1v1h-1z" fill="#5e4040"/>
<path d="M120.5 687 V728 M99.5 707.5 H140.5" stroke="#7a0a0a" stroke-width="1.6"/>
<path d="M93 153.5 H1140 M93 733.5 H1140 M93.5 153 V734 M1139.5 153 V734" stroke="#eef2f2" stroke-width="1"/><path d="M94 154.5 H1139 M94 732.5 H1139 M94.5 154 V733 M1138.5 154 V733" stroke="#f4aeae" stroke-width="1"/><path d="M95 155.5 H1138 M95 731.5 H1138 M95.5 155 V732 M1137.5 155 V732" stroke="#6e0202" stroke-width="1"/>


<g stroke="#f2c4c4" stroke-width="1.5" fill="none" stroke-linecap="round"><path d="M320.5 407 V606.5 H220"/><path d="M520 507 L720 407 L920 507 L720 607 Z"/></g>
<circle cx="720" cy="406.8" r="4.6" fill="none" stroke="#c01414" stroke-width="1.1"/>
<circle cx="744.2" cy="377.8" r="40" fill="url(#gRing)"/><g fill="none" stroke="#9aa0b2" stroke-width="1"><circle cx="744.2" cy="377.8" r="38" opacity="0.45"/><circle cx="744.2" cy="377.8" r="35.5" opacity="0.35"/><circle cx="744.2" cy="377.8" r="33" opacity="0.2"/></g>
<path d="M744 378 L744 401 L749.5 396 L754 406.5 L758.3 404.6 L754.2 394.6 L761 394.6 Z" fill="#fff" stroke="#000" stroke-width="1.1" stroke-linejoin="round"/>
<g clip-path="url(#cpH)">
<line x1="120.5" y1="148" x2="120.5" y2="155" stroke="#555" stroke-width="1"/>
<text x="120.3" y="141" font-size="9.8" text-anchor="middle" fill="#111" letter-spacing="-0.6">0</text>
<line x1="170.5" y1="148" x2="170.5" y2="155" stroke="#555" stroke-width="1"/>
<text x="170.3" y="141" font-size="9.8" text-anchor="middle" fill="#111" letter-spacing="-0.6">10</text>
<line x1="220.5" y1="148" x2="220.5" y2="155" stroke="#555" stroke-width="1"/>
<text x="220.3" y="141" font-size="9.8" text-anchor="middle" fill="#111" letter-spacing="-0.6">20</text>
<line x1="270.5" y1="148" x2="270.5" y2="155" stroke="#555" stroke-width="1"/>
<text x="270.3" y="141" font-size="9.8" text-anchor="middle" fill="#111" letter-spacing="-0.6">30</text>
<line x1="320.5" y1="148" x2="320.5" y2="155" stroke="#555" stroke-width="1"/>
<text x="320.3" y="141" font-size="9.8" text-anchor="middle" fill="#111" letter-spacing="-0.6">40</text>
<line x1="370.5" y1="148" x2="370.5" y2="155" stroke="#555" stroke-width="1"/>
<text x="370.3" y="141" font-size="9.8" text-anchor="middle" fill="#111" letter-spacing="-0.6">50</text>
<line x1="420.5" y1="148" x2="420.5" y2="155" stroke="#555" stroke-width="1"/>
<text x="420.3" y="141" font-size="9.8" text-anchor="middle" fill="#111" letter-spacing="-0.6">60</text>
<line x1="470.5" y1="148" x2="470.5" y2="155" stroke="#555" stroke-width="1"/>
<text x="470.3" y="141" font-size="9.8" text-anchor="middle" fill="#111" letter-spacing="-0.6">70</text>
<line x1="520.5" y1="148" x2="520.5" y2="155" stroke="#555" stroke-width="1"/>
<text x="520.3" y="141" font-size="9.8" text-anchor="middle" fill="#111" letter-spacing="-0.6">80</text>
<line x1="570.5" y1="148" x2="570.5" y2="155" stroke="#555" stroke-width="1"/>
<text x="570.3" y="141" font-size="9.8" text-anchor="middle" fill="#111" letter-spacing="-0.6">90</text>
<line x1="620.5" y1="148" x2="620.5" y2="155" stroke="#555" stroke-width="1"/>
<text x="620.3" y="141" font-size="9.8" text-anchor="middle" fill="#111" letter-spacing="-0.6">100</text>
<line x1="670.5" y1="148" x2="670.5" y2="155" stroke="#555" stroke-width="1"/>
<text x="670.3" y="141" font-size="9.8" text-anchor="middle" fill="#111" letter-spacing="-0.6">110</text>
<line x1="720.5" y1="148" x2="720.5" y2="155" stroke="#555" stroke-width="1"/>
<text x="720.3" y="141" font-size="9.8" text-anchor="middle" fill="#111" letter-spacing="-0.6">120</text>
<line x1="770.5" y1="148" x2="770.5" y2="155" stroke="#555" stroke-width="1"/>
<text x="770.3" y="141" font-size="9.8" text-anchor="middle" fill="#111" letter-spacing="-0.6">130</text>
<line x1="820.5" y1="148" x2="820.5" y2="155" stroke="#555" stroke-width="1"/>
<text x="820.3" y="141" font-size="9.8" text-anchor="middle" fill="#111" letter-spacing="-0.6">140</text>
<line x1="870.5" y1="148" x2="870.5" y2="155" stroke="#555" stroke-width="1"/>
<text x="870.3" y="141" font-size="9.8" text-anchor="middle" fill="#111" letter-spacing="-0.6">150</text>
<line x1="920.5" y1="148" x2="920.5" y2="155" stroke="#555" stroke-width="1"/>
<text x="920.3" y="141" font-size="9.8" text-anchor="middle" fill="#111" letter-spacing="-0.6">160</text>
<line x1="970.5" y1="148" x2="970.5" y2="155" stroke="#555" stroke-width="1"/>
<text x="970.3" y="141" font-size="9.8" text-anchor="middle" fill="#111" letter-spacing="-0.6">170</text>
<line x1="1020.5" y1="148" x2="1020.5" y2="155" stroke="#555" stroke-width="1"/>
<text x="1020.3" y="141" font-size="9.8" text-anchor="middle" fill="#111" letter-spacing="-0.6">180</text>
<line x1="1070.5" y1="148" x2="1070.5" y2="155" stroke="#555" stroke-width="1"/>
<text x="1070.3" y="141" font-size="9.8" text-anchor="middle" fill="#111" letter-spacing="-0.6">190</text>
<line x1="1120.5" y1="148" x2="1120.5" y2="155" stroke="#555" stroke-width="1"/>
<text x="1120.3" y="141" font-size="9.8" text-anchor="middle" fill="#111" letter-spacing="-0.6">200</text>
<path d="M738.5 145 H750.2 L744.3 151 Z" fill="#000"/>
</g>
<g clip-path="url(#cpV)">
<line x1="88" y1="707.5" x2="95" y2="707.5" stroke="#555" stroke-width="1"/>
<text transform="translate(81 707.3) rotate(-90)" font-size="9.8" text-anchor="middle" fill="#111" letter-spacing="-0.6">0</text>
<line x1="88" y1="657.5" x2="95" y2="657.5" stroke="#555" stroke-width="1"/>
<text transform="translate(81 657.3) rotate(-90)" font-size="9.8" text-anchor="middle" fill="#111" letter-spacing="-0.6">10</text>
<line x1="88" y1="607.5" x2="95" y2="607.5" stroke="#555" stroke-width="1"/>
<text transform="translate(81 607.3) rotate(-90)" font-size="9.8" text-anchor="middle" fill="#111" letter-spacing="-0.6">20</text>
<line x1="88" y1="557.5" x2="95" y2="557.5" stroke="#555" stroke-width="1"/>
<text transform="translate(81 557.3) rotate(-90)" font-size="9.8" text-anchor="middle" fill="#111" letter-spacing="-0.6">30</text>
<line x1="88" y1="507.5" x2="95" y2="507.5" stroke="#555" stroke-width="1"/>
<text transform="translate(81 507.3) rotate(-90)" font-size="9.8" text-anchor="middle" fill="#111" letter-spacing="-0.6">40</text>
<line x1="88" y1="457.5" x2="95" y2="457.5" stroke="#555" stroke-width="1"/>
<text transform="translate(81 457.3) rotate(-90)" font-size="9.8" text-anchor="middle" fill="#111" letter-spacing="-0.6">50</text>
<line x1="88" y1="407.5" x2="95" y2="407.5" stroke="#555" stroke-width="1"/>
<text transform="translate(81 407.3) rotate(-90)" font-size="9.8" text-anchor="middle" fill="#111" letter-spacing="-0.6">60</text>
<line x1="88" y1="357.5" x2="95" y2="357.5" stroke="#555" stroke-width="1"/>
<text transform="translate(81 357.3) rotate(-90)" font-size="9.8" text-anchor="middle" fill="#111" letter-spacing="-0.6">70</text>
<line x1="88" y1="307.5" x2="95" y2="307.5" stroke="#555" stroke-width="1"/>
<text transform="translate(81 307.3) rotate(-90)" font-size="9.8" text-anchor="middle" fill="#111" letter-spacing="-0.6">80</text>
<line x1="88" y1="257.5" x2="95" y2="257.5" stroke="#555" stroke-width="1"/>
<text transform="translate(81 257.3) rotate(-90)" font-size="9.8" text-anchor="middle" fill="#111" letter-spacing="-0.6">90</text>
<line x1="88" y1="207.5" x2="95" y2="207.5" stroke="#555" stroke-width="1"/>
<text transform="translate(81 207.3) rotate(-90)" font-size="9.8" text-anchor="middle" fill="#111" letter-spacing="-0.6">100</text>
<line x1="88" y1="157.5" x2="95" y2="157.5" stroke="#555" stroke-width="1"/>
<text transform="translate(81 157.3) rotate(-90)" font-size="9.8" text-anchor="middle" fill="#111" letter-spacing="-0.6">110</text>
<path d="M85 372 V384 L91 378 Z" fill="#000"/>
</g>
<rect x="85" y="154" width="9" height="2" fill="url(#gL)"/><rect x="94" y="145" width="2" height="9" fill="url(#gU)"/><rect x="1139" y="154" width="9" height="2" fill="url(#gR)"/><rect x="1137" y="145" width="2" height="9" fill="url(#gU)"/><rect x="85" y="731" width="9" height="2" fill="url(#gL)"/><rect x="94" y="733" width="2" height="9" fill="url(#gD)"/><rect x="1139" y="731" width="9" height="2" fill="url(#gR)"/><rect x="1137" y="733" width="2" height="9" fill="url(#gD)"/></svg>
<div id="panel" class="a"></div>
<div class="a" style="left:1155px;top:108px;width:299px;height:22px;background:linear-gradient(#ececec,#d8d8d8)"></div>
<div class="a" style="left:1280px;top:112px;font-size:11.8px;color:#262626;white-space:nowrap">Elenco dei livelli</div>
<div class="a" style="left:1155px;top:130px;width:300px;height:27px;background:#a9a9a9"></div>
<div class="a" style="left:1156px;top:131px;width:58px;height:24px;background:linear-gradient(#ececec,#f8f8f8)"></div>
<div class="a" style="left:1216px;top:131px;width:58px;height:24px;background:linear-gradient(#ececec,#f8f8f8)"></div>
<div class="a" style="left:1276px;top:131px;width:58px;height:24px;background:linear-gradient(#ececec,#f8f8f8)"></div>
<div class="a" style="left:1336px;top:131px;width:58px;height:24px;background:linear-gradient(#ececec,#f8f8f8)"></div>
<div class="a" style="left:1396px;top:131px;width:58px;height:24px;background:linear-gradient(#ececec,#f8f8f8)"></div>
<div class="a" style="left:1155px;top:157px;width:299px;height:641px;background:#fff"></div>
<div class="a" style="left:1154px;top:157px;width:2px;height:641px;background:#b8b8b8"></div>
<div class="a" style="left:1454px;top:108px;width:2px;height:690px;background:#c8c8c8"></div>
<div class="a" style="left:1182px;top:159px;font-size:14px;color:#111">0</div>
<svg class="a" style="left:1155px;top:108px" width="300" height="75" viewBox="1155 108 300 75">
<defs>
<g id="eye"><path d="M-7.2 0.8 Q0 -8.5 7.2 0.8 Q0 6.5 -7.2 0.8 Z" fill="#fff" stroke-width="1.7" stroke-linejoin="round"/><circle cx="0" cy="0.6" r="3.9" stroke="none"/><circle cx="-1" cy="-0.6" r="1" fill="#fff" stroke="none"/></g>
<g id="pencil"><path d="M-6.5 6.5 L4 -4 L6 -2 L-4.5 8.5 Z" fill="#e8b040" stroke="#805010" stroke-width="0.7"/><path d="M4 -4 L5.5 -5.5 L7.5 -3.5 L6 -2 Z" fill="#e03020"/><path d="M-6.5 6.5 L-4.5 8.5 L-7.6 9.2 Z" fill="#302010"/></g>
</defs>
<circle cx="1164" cy="118" r="7" fill="#6e6e6e"/>
<path d="M1161 115 L1167 121 M1167 115 L1161 121" stroke="#e8e8e8" stroke-width="1.8"/>
<circle cx="1182" cy="118" r="7" fill="#6e6e6e"/>
<rect x="1179" y="117" width="6" height="4.5" fill="none" stroke="#e8e8e8" stroke-width="1.1"/>
<path d="M1181 116.8 V115 H1187 V119.5 H1185.2" fill="none" stroke="#e8e8e8" stroke-width="1.1"/>
<g transform="translate(1185.3 142.5)" fill="#111" stroke="#111"><use href="#eye"/></g>
<g transform="translate(1245 142.5)" fill="#a8a8a8" stroke="#a8a8a8"><use href="#eye"/></g>
<path d="M1299 142.6 H1311 M1305 136.6 V148.6" stroke="#e00000" stroke-width="3"/>
<path d="M1359 142.6 H1371" stroke="#e00000" stroke-width="3"/>
<g transform="translate(1425 142.5)"><use href="#pencil"/></g>
<rect x="1161.5" y="163.5" width="15" height="8" fill="#fff" stroke="#111" stroke-width="1.1"/>
<g transform="translate(1401 166.5) scale(0.95)"><use href="#pencil"/></g>
<g transform="translate(1423 167)" fill="#111" stroke="#111"><use href="#eye"/></g>
<rect x="1439.5" y="166" width="10" height="8.5" rx="1" fill="#c0c0c0"/>
<path d="M1441.5 166 V163.5 A3 3 0 0 1 1447.5 163.5 V166" fill="none" stroke="#c0c0c0" stroke-width="1.4"/>
</svg>

<div id="dockR" class="a"></div>
<svg class="a" style="left:1456px;top:108px" width="44" height="400" viewBox="1456 108 44 400">
<defs>
<g id="win"><rect x="0.6" y="0.6" width="26.8" height="26.8" fill="#fff" stroke="#2a2a2a" stroke-width="1.1"/><rect x="0" y="0" width="28" height="4.6" fill="#000"/><rect x="1.2" y="1.1" width="3" height="2.9" fill="#fff"/></g>
</defs>
<g fill="#a8a8a8"><rect x="1462" y="116" width="2" height="2"/><rect x="1468" y="116" width="2" height="2"/><rect x="1474" y="116" width="2" height="2"/><rect x="1480" y="116" width="2" height="2"/><rect x="1486" y="116" width="2" height="2"/></g>
<path d="M1458 261.5 H1500 M1458 410.5 H1500" stroke="#777" stroke-width="1" stroke-dasharray="1 2"/>
<rect x="1456.5" y="120.5" width="42.5" height="42" rx="5" fill="#b6b6b6"/>
<rect x="1456.5" y="417" width="42.5" height="42.5" rx="5" fill="#b6b6b6"/>
<use href="#win" x="1463" y="127"/>
<use href="#win" x="1463" y="174"/>
<use href="#win" x="1463" y="220"/>
<use href="#win" x="1463" y="276"/>
<use href="#win" x="1463" y="322"/>
<use href="#win" x="1463" y="368"/>
<use href="#win" x="1463" y="424"/>
<use href="#win" x="1463" y="471"/>
<!-- icon 1: layers -->
<path d="M1471 141 L1478 137 L1478 147 L1471 151 Z" fill="#8a8a8a" stroke="#555" stroke-width="0.6"/>
<path d="M1474 140 L1484 135 L1484 145 L1474 150 Z" fill="#fff" stroke="#555" stroke-width="0.7"/>
<path d="M1477 146 L1482 138 L1482 145 Z" fill="none" stroke="#e02020" stroke-width="0.7"/>
<!-- icon 2: block -->
<rect x="1471" y="184" width="10" height="8" fill="#f3ebc6" stroke="#777" stroke-width="0.7"/>
<circle cx="1480" cy="190.5" r="4" fill="#f3ebc6" stroke="#777" stroke-width="0.7"/>
<!-- icon 3 -->
<rect x="1470" y="233" width="15" height="10" rx="2" fill="#f2f2f6" stroke="#c0cce0" stroke-width="0.8"/>
<!-- icon 4: list -->
<g fill="#111"><rect x="1466.5" y="284" width="3.5" height="2.5" rx="0.5"/><rect x="1466.5" y="290" width="3.5" height="2.5" rx="0.5"/><rect x="1466.5" y="296" width="3.5" height="2.5" rx="0.5"/></g>
<g fill="none" stroke="#444" stroke-width="0.7"><rect x="1473" y="284" width="14" height="2.8"/><rect x="1473" y="290" width="14" height="2.8"/><rect x="1473" y="296" width="14" height="2.8"/></g>
<!-- icon 5: funnel -->
<path d="M1470 331 H1484 L1478.5 337 V344 L1476 342.5 V337 Z" fill="#a8a8a8" stroke="#555" stroke-width="0.6"/>
<!-- icon 6: screw -->
<path d="M1469 376 L1474 379 V385 L1469 388 Z" fill="#fff" stroke="#222" stroke-width="0.7"/>
<rect x="1474" y="379" width="10" height="6" fill="#9a9a9a"/>
<path d="M1467 382 H1487" stroke="#e06060" stroke-width="0.6" stroke-dasharray="1 1"/>
<!-- icon 7: command -->
<g stroke="#9a9a9a" stroke-width="0.8"><path d="M1465 432.5 H1479.5 M1465 436 H1478.5 M1465 439.5 H1481.5 M1465 443 H1482.5"/></g>
<path d="M1463.5 446.5 H1490.5" stroke="#333" stroke-width="0.8"/>
<path d="M1472.5 449 H1488" stroke="#777" stroke-width="1.2"/><path d="M1465 449 H1467.5" stroke="#777" stroke-width="1"/>
<!-- icon 8: clipboard -->
<rect x="1471" y="479" width="12" height="14" rx="1" fill="#c08432"/>
<rect x="1473" y="481.5" width="8" height="10" fill="#f4f4f4"/>
<rect x="1474" y="478" width="6" height="2.5" fill="#888"/>
</svg>

<div id="status" class="a"></div>
<div class="a" style="left:0;top:797px;width:1500px;height:1px;background:#cfcfcf"></div>
<div class="st" style="left:2px;top:807px;font-size:10.2px">124.8,65.8</div>
<div class="st" style="left:2px;top:827px;font-size:10.2px">@4.8,5.8</div>
<div class="a" style="left:254px;top:802px;width:1px;height:40px;background:#8c8c8c"></div>
<div class="st" style="left:256px;top:807px;font-size:10.2px">141.0839&lt;28°</div>
<div class="st" style="left:256px;top:827px;font-size:10.2px">@7.5286&lt;50°</div>
<div class="st" style="left:572px;top:817px;font-size:10.2px;letter-spacing:0.05px">Selezionare entità o regione</div>
<div class="st" style="left:949px;top:817px;font-size:10.2px;letter-spacing:0.08px">Nessun entità selezionate.</div>
<svg class="a" style="left:500px;top:800px" width="800" height="44" viewBox="500 800 800 44">
<circle cx="509.4" cy="822" r="3" fill="#c6c6c6"/>
<circle cx="943.2" cy="822" r="3" fill="#c6c6c6"/>
<circle cx="1272.7" cy="822" r="3" fill="#c6c6c6"/>
<rect x="717.5" y="806.5" width="17" height="29" rx="8.5" fill="#fff" stroke="#333" stroke-width="0.9"/>
<path d="M717.8 819.5 Q726 817 734.2 819.5" fill="none" stroke="#333" stroke-width="0.9"/>
<path d="M726 807 V819" stroke="#333" stroke-width="0.7"/>
<rect x="724.5" y="809.5" width="3" height="6" rx="1.5" fill="#fff" stroke="#333" stroke-width="0.8"/>
</svg>
<div class="a" style="left:72px;top:108px;width:1px;height:689px;background:#f3f3f3"></div>

</body></html>
